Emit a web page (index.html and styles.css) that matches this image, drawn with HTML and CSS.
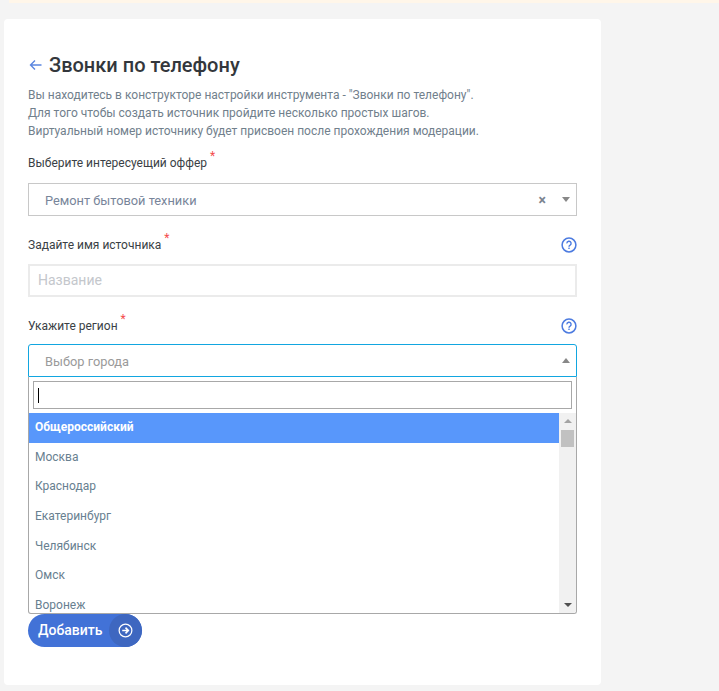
FILE: index.html
```html
<!DOCTYPE html>
<html lang="ru">
<head>
<meta charset="utf-8">
<title>Звонки по телефону</title>
<link rel="stylesheet" href="styles.css">
</head>
<body>
<div class="topstrip"></div>
<main class="card">
  <h1 class="title">
    <svg class="back" width="14" height="12" viewBox="0 0 14 12"><path d="M12.5 6H1.5M6 1.5L1.5 6L6 10.5" fill="none" stroke="#5b86e0" stroke-width="1.4"/></svg>
    Звонки по телефону
  </h1>
  <p class="desc">Вы находитесь в конструкторе настройки инструмента - "Звонки по телефону".<br>Для того чтобы создать источник пройдите несколько простых шагов.<br>Виртуальный номер источнику будет присвоен после прохождения модерации.</p>

  <div class="label-row first"><span class="label">Выберите интересуещий оффер<sup class="req">*</sup></span></div>
  <div class="select">
    <span class="select-text">Ремонт бытовой техники</span>
    <span class="clear">×</span>
    <span class="arrow-down"></span>
  </div>

  <div class="label-row second">
    <span class="label">Задайте имя источника<sup class="req">*</sup></span>
    <svg class="help" width="16" height="16" viewBox="0 0 16 16"><circle cx="8" cy="8" r="6.9" fill="none" stroke="#4c7be0" stroke-width="1.5"/><path d="M5.9 6.4A2.1 2.1 0 1 1 9.1 8.1C8.4 8.5 8 8.9 8 9.7" fill="none" stroke="#4c7be0" stroke-width="1.4"/><rect x="7.3" y="10.6" width="1.4" height="1.4" fill="#4c7be0"/></svg>
  </div>
  <input class="name-input" type="text" placeholder="Название">

  <div class="label-row third">
    <span class="label">Укажите регион<sup class="req">*</sup></span>
    <svg class="help" width="16" height="16" viewBox="0 0 16 16"><circle cx="8" cy="8" r="6.9" fill="none" stroke="#4c7be0" stroke-width="1.5"/><path d="M5.9 6.4A2.1 2.1 0 1 1 9.1 8.1C8.4 8.5 8 8.9 8 9.7" fill="none" stroke="#4c7be0" stroke-width="1.4"/><rect x="7.3" y="10.6" width="1.4" height="1.4" fill="#4c7be0"/></svg>
  </div>
  <div class="region">
    <div class="select open">
      <span class="select-text placeholder">Выбор города</span>
      <span class="arrow-up"></span>
    </div>
    <div class="dropdown">
      <div class="search-wrap"><div class="search"><span class="caret"></span></div></div>
      <div class="list-wrap">
        <ul class="list">
          <li class="active">Общероссийский</li>
          <li>Москва</li>
          <li>Краснодар</li>
          <li>Екатеринбург</li>
          <li>Челябинск</li>
          <li>Омск</li>
          <li>Воронеж</li>
        </ul>
        <div class="scrollbar">
          <span class="sb-up"></span>
          <span class="sb-thumb"></span>
          <span class="sb-down"></span>
        </div>
      </div>
    </div>
  </div>

  <button class="add" type="button">
    <span class="add-text">Добавить</span>
    <span class="add-icon">
      <svg width="15" height="15" viewBox="0 0 16 16"><circle cx="8" cy="8" r="6.8" fill="none" stroke="#fff" stroke-width="1.3"/><path d="M4.5 8H10.8M8 5L11 8L8 11" fill="none" stroke="#fff" stroke-width="1.7"/></svg>
    </span>
  </button>
</main>
</body>
</html>
```
FILE: styles.css
```css
* { box-sizing: border-box; }
html, body { margin: 0; height: 691px; overflow: hidden; }
body {
  background: #f4f4f4;
  font-family: Roboto, "Liberation Sans", sans-serif;
  color: #333;
}
.topstrip {
  height: 3px;
  margin: 0 0 0 9px;
  background: #fff6e9;
}
.card {
  width: 597px;
  height: 666px;
  margin: 16px 0 0 4px;
  padding: 34px 24px 0;
  background: #fff;
  border-radius: 4px;
}
.title {
  display: flex;
  align-items: center;
  gap: 6px;
  margin: 0;
  height: 24px;
  font-size: 20px;
  line-height: 24px;
  font-weight: 500;
  color: #33373c;
}
.back { flex: none; margin-left: 1px; }
.desc {
  margin: 9px 0 0;
  font-size: 12px;
  line-height: 18px;
  color: #71808c;
}
.label-row {
  display: flex;
  justify-content: space-between;
  align-items: center;
  height: 16px;
}
.label-row.first { margin-top: 15px; }
.label-row.second { margin-top: 21px; }
.label-row.third { margin-top: 21px; }
.label {
  font-size: 12px;
  line-height: 16px;
  color: #3a3f45;
  position: relative;
}
.req {
  position: absolute;
  top: -5px;
  margin-left: 3px;
  font-size: 12px;
  line-height: 12px;
  color: #f44c4c;
  vertical-align: baseline;
}
.help { flex: none; }
.select {
  display: flex;
  align-items: center;
  height: 33px;
  margin-top: 12px;
  padding: 0 6px 0 16px;
  border: 1px solid #c8c8c8;
  background: #fff;
}
.select.open { margin-top: 0; border-color: #12a6e0; border-radius: 3px 3px 0 0; }
.select-text {
  flex: 1;
  padding-top: 1px;
  font-size: 12.8px;
  color: #78859a;
}
.select-text.placeholder { color: #9a9a9a; }
.clear {
  font-size: 14px;
  font-weight: 700;
  line-height: 14px;
  color: #7c8490;
  margin-right: 16px;
}
.arrow-down {
  width: 0; height: 0;
  border-left: 4px solid transparent;
  border-right: 4px solid transparent;
  border-top: 5px solid #888;
}
.arrow-up {
  width: 0; height: 0;
  border-left: 4px solid transparent;
  border-right: 4px solid transparent;
  border-bottom: 5px solid #888;
}
.name-input {
  display: block;
  width: 100%;
  height: 33px;
  margin-top: 11px;
  padding: 0 8px 2px;
  border: 2px solid #ebebeb;
  outline: none;
  font-family: inherit;
  font-size: 14px;
  background: #fff;
}
.name-input::placeholder { color: #c4c7cc; opacity: 1; }
.region { position: relative; margin-top: 10px; }
.dropdown {
  position: absolute;
  left: 0;
  right: 0;
  top: 33px;
  height: 237px;
  background: #fff;
  border: 1px solid #a8a8a8;
  border-top: 0;
  border-radius: 0 0 3px 3px;
  overflow: hidden;
}
.search-wrap { padding: 4px 4px 4px; }
.search {
  display: flex;
  align-items: center;
  height: 28px;
  padding-left: 4px;
  border: 1px solid #a8a8a8;
}
.caret { width: 1px; height: 15px; background: #000; }
.list-wrap { display: flex; height: 200px; }
.list {
  flex: 1;
  margin: 0;
  padding: 0;
  list-style: none;
  overflow: hidden;
}
.list li {
  height: 29.7px;
  padding-left: 6px;
  font-size: 12px;
  line-height: 29.7px;
  color: #688090;
}
.list li.active {
  background: #5897fb;
  color: #fff;
  font-weight: 700;
}
.scrollbar {
  position: relative;
  width: 17px;
  flex: none;
  background: #f1f1f1;
}
.sb-up {
  position: absolute;
  top: 6px;
  left: 5px;
  width: 0; height: 0;
  border-left: 4px solid transparent;
  border-right: 4px solid transparent;
  border-bottom: 4px solid #a3a3a3;
}
.sb-thumb {
  position: absolute;
  top: 17px;
  left: 2px;
  width: 13px;
  height: 17px;
  background: #c1c1c1;
}
.sb-down {
  position: absolute;
  bottom: 6px;
  left: 5px;
  width: 0; height: 0;
  border-left: 4px solid transparent;
  border-right: 4px solid transparent;
  border-top: 4px solid #505050;
}
.add {
  display: flex;
  align-items: center;
  justify-content: space-between;
  width: 114px;
  height: 33px;
  margin-top: 237px;
  padding: 0 0 0 10px;
  border: 0;
  border-radius: 17px;
  background: #4272d7;
  font-family: inherit;
  font-size: 14px;
  font-weight: 500;
  color: #fff;
}
.add-text { padding-bottom: 1px; }
.add-icon {
  display: flex;
  align-items: center;
  justify-content: center;
  width: 33px;
  height: 33px;
  border-radius: 50%;
  background: #3e67c0;
}
```
